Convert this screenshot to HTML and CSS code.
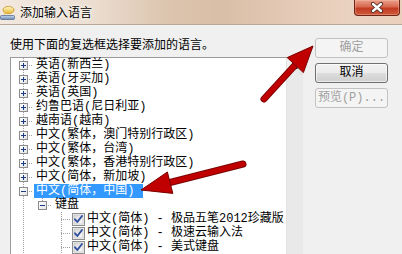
FILE: index.html
```html
<!DOCTYPE html>
<html lang="zh-CN">
<head>
<meta charset="utf-8">
<title>添加输入语言</title>
<link rel="stylesheet" href="styles.css">
</head>
<body>
<div class="window">
  <div class="titlebar">
    <svg class="app-icon" width="16" height="18" viewBox="0 0 16 18">
      <defs>
        <linearGradient id="bub" x1="0" y1="0" x2="0" y2="1">
          <stop offset="0" stop-color="#fff8c8"/>
          <stop offset="1" stop-color="#e8b830"/>
        </linearGradient>
        <linearGradient id="kb" x1="0" y1="0" x2="0" y2="1">
          <stop offset="0" stop-color="#c8d8ec"/>
          <stop offset="1" stop-color="#6a88b4"/>
        </linearGradient>
      </defs>
      <ellipse cx="8.5" cy="7" rx="5.5" ry="3.6" fill="url(#bub)" stroke="#c0901c" stroke-width="0.8"/>
      <path d="M5 9.5 L3.5 12 L7 10.2 Z" fill="#e8c040"/>
      <rect x="0.5" y="12.5" width="14" height="4" rx="1" fill="url(#kb)" stroke="#5a6f90" stroke-width="0.8"/>
    </svg>
    <span class="title">添加输入语言</span>
    <div class="close">
      <svg width="14" height="11" viewBox="0 0 14 11">
        <path d="M3 2 L11 9 M11 2 L3 9" stroke="#4a2a22" stroke-width="4.2" stroke-linecap="round"/>
        <path d="M3 2 L11 9 M11 2 L3 9" stroke="#ffffff" stroke-width="2.4" stroke-linecap="round"/>
      </svg>
    </div>
  </div>

  <div class="content">
    <div class="main">
      <p class="hint">使用下面的复选框选择要添加的语言。</p>
      <div class="treebox">
        <div class="tree">
          <div class="row"><span class="g t"><i class="exp plus"></i></span><span class="label">英语(新西兰)</span></div>
          <div class="row"><span class="g t"><i class="exp plus"></i></span><span class="label">英语(牙买加)</span></div>
          <div class="row"><span class="g t"><i class="exp plus"></i></span><span class="label">英语(英国)</span></div>
          <div class="row"><span class="g t"><i class="exp plus"></i></span><span class="label">约鲁巴语(尼日利亚)</span></div>
          <div class="row"><span class="g t"><i class="exp plus"></i></span><span class="label">越南语(越南)</span></div>
          <div class="row"><span class="g t"><i class="exp plus"></i></span><span class="label">中文(繁体，澳门特别行政区)</span></div>
          <div class="row"><span class="g t"><i class="exp plus"></i></span><span class="label">中文(繁体，台湾)</span></div>
          <div class="row"><span class="g t"><i class="exp plus"></i></span><span class="label">中文(繁体，香港特别行政区)</span></div>
          <div class="row"><span class="g t"><i class="exp plus"></i></span><span class="label">中文(简体，新加坡)</span></div>
          <div class="row"><span class="g t"><i class="exp"></i></span><span class="label selected">中文(简体，中国)</span></div>
          <div class="row"><span class="g v"></span><span class="g l"><i class="exp"></i></span><span class="label">键盘</span></div>
          <div class="row"><span class="g v"></span><span class="g"></span><span class="g t"></span><span class="check"><svg width="13" height="13" viewBox="0 0 13 13"><use href="#cb"/></svg></span><span class="label leaf">中文(简体) - 极品五笔2012珍藏版</span></div>
          <div class="row"><span class="g v"></span><span class="g"></span><span class="g t"></span><span class="check"><svg width="13" height="13" viewBox="0 0 13 13"><use href="#cb"/></svg></span><span class="label leaf">中文(简体) - 极速云输入法</span></div>
          <div class="row"><span class="g v"></span><span class="g"></span><span class="g t"></span><span class="check"><svg width="13" height="13" viewBox="0 0 13 13"><use href="#cb"/></svg></span><span class="label leaf">中文(简体) - 美式键盘</span></div>
        </div>
        <div class="vscroll">
          <div class="sbtn"><svg width="7" height="4" viewBox="0 0 7 4"><path d="M0 4 L3.5 0 L7 4 Z" fill="#222"/></svg></div>
        </div>
      </div>
    </div>
    <div class="buttons">
      <div class="btn disabled">确定</div>
      <div class="btn">取消</div>
      <div class="btn disabled">预览(P)...</div>
    </div>
  </div>

  <svg class="defs" width="0" height="0">
    <defs>
      <linearGradient id="cbg" x1="0" y1="0" x2="1" y2="1">
        <stop offset="0" stop-color="#d8d8d8"/>
        <stop offset="1" stop-color="#fbfbfb"/>
      </linearGradient>
      <g id="cb">
        <rect x="0.5" y="0.5" width="12" height="12" fill="#f4f4f4" stroke="#8e8f8f"/>
        <rect x="2" y="2" width="9" height="9" fill="url(#cbg)" stroke="#b8b8b8" stroke-width="0.6"/>
        <path d="M3 6.3 L5.3 9 L10 3" fill="none" stroke="#2f4f9f" stroke-width="1.9" stroke-linejoin="round" stroke-linecap="round"/>
      </g>
    </defs>
  </svg>

  <svg class="arrows" width="402" height="254" viewBox="0 0 402 254">
    <g stroke-linejoin="round">
      <line x1="264" y1="99" x2="297" y2="63" stroke="#7a0000" stroke-width="7" stroke-linecap="round"/>
      <line x1="264" y1="99" x2="297" y2="63" stroke="#c00000" stroke-width="5" stroke-linecap="round"/>
      <path d="M313 46 L303.4 72.6 L287.2 57.6 Z" fill="#c00000" stroke="#7a0000" stroke-width="1"/>
      <line x1="243" y1="164" x2="168" y2="183" stroke="#7a0000" stroke-width="7" stroke-linecap="round"/>
      <line x1="243" y1="164" x2="168" y2="183" stroke="#c00000" stroke-width="5" stroke-linecap="round"/>
      <path d="M141 190 L167.4 172 L172.8 193.4 Z" fill="#c00000" stroke="#7a0000" stroke-width="1"/>
    </g>
  </svg>
</div>
</body>
</html>
```

FILE: styles.css
```css
html, body {
  margin: 0;
  padding: 0;
}

body {
  font-family: "Liberation Mono", "Noto Sans CJK SC", monospace;
  font-size: 12px;
  color: #000;
}

.window {
  position: relative;
  width: 402px;
  height: 254px;
  overflow: hidden;
  background: #f0f0f0;
}

.titlebar {
  display: flex;
  align-items: center;
  height: 24px;
  border-bottom: 1px solid #b8a696;
  background: linear-gradient(90deg, #f2e8df 0%, #ecdfd2 22%, #dcc4ae 42%, #d9bea7 55%, #e4cab6 72%, #ebd3c1 88%, #e9cfbc 100%);
}

.app-icon {
  flex: none;
  margin: 0 4px 0 0;
}

.title {
  font-family: "Noto Sans CJK SC", sans-serif;
  font-size: 12px;
  line-height: 16px;
  text-shadow: 0 0 6px rgba(255, 255, 255, 0.95), 0 0 3px rgba(255, 255, 255, 0.9);
}

.close {
  align-self: flex-start;
  margin-left: auto;
  margin-right: 2px;
  width: 44px;
  height: 15px;
  border: 1px solid #6e2418;
  border-top: none;
  border-radius: 0 0 4px 4px;
  background: linear-gradient(to bottom, #e9a08c 0%, #d9684f 45%, #c23b22 55%, #cf5a3c 100%);
  display: flex;
  align-items: center;
  justify-content: center;
  box-shadow: inset 0 0 0 1px rgba(255, 200, 180, 0.35);
}

.close svg {
  display: block;
  margin-top: -1px;
}

.content {
  display: flex;
  gap: 14px;
  padding: 11px 14px 0 10px;
}

.main {
  width: 291px;
  flex: none;
}

.hint {
  margin: 0 0 5px 0;
  line-height: 16px;
  font-family: "Noto Sans CJK SC", sans-serif;
}

.treebox {
  display: flex;
  height: 220px;
  border: 1px solid #9a9a9a;
  border-right-color: #828282;
  background: #fff;
}

.tree {
  flex: 1;
  padding-left: 3px;
}

.row {
  display: flex;
  align-items: center;
  height: 14px;
  line-height: 14px;
  white-space: nowrap;
}

.g {
  flex: none;
  width: 19px;
  height: 14px;
  display: flex;
  align-items: center;
  justify-content: center;
}

.g.v {
  background: repeating-linear-gradient(to bottom, #a0a0a0 0 1px, transparent 1px 2px) 9px 0 / 1px 100% no-repeat;
}

.g.t {
  background:
    repeating-linear-gradient(to bottom, #a0a0a0 0 1px, transparent 1px 2px) 9px 0 / 1px 100% no-repeat,
    repeating-linear-gradient(to right, #a0a0a0 0 1px, transparent 1px 2px) 9px 7px / 10px 1px no-repeat;
}

.g.l {
  background:
    repeating-linear-gradient(to bottom, #a0a0a0 0 1px, transparent 1px 2px) 9px 0 / 1px 7px no-repeat,
    repeating-linear-gradient(to right, #a0a0a0 0 1px, transparent 1px 2px) 9px 7px / 10px 1px no-repeat;
}

.exp {
  position: relative;
  width: 7px;
  height: 7px;
  border: 1px solid #8c8c8c;
  background: linear-gradient(135deg, #ffffff 0%, #e4e4e4 100%);
  margin-top: 1px;
}

.exp::before {
  content: "";
  position: absolute;
  left: 1px;
  top: 3px;
  width: 5px;
  height: 1px;
  background: #1c3a8a;
}

.exp.plus::after {
  content: "";
  position: absolute;
  left: 3px;
  top: 1px;
  width: 1px;
  height: 5px;
  background: #1c3a8a;
}

.label {
  margin-left: 1px;
  padding: 0 2px;
}

.label.selected {
  background: #3399ff;
  color: #fff;
  padding-right: 9px;
}

.check {
  flex: none;
  margin-left: 1px;
  width: 13px;
  height: 13px;
}

.check svg {
  display: block;
}

.label.leaf {
  margin-left: 0;
}

.vscroll {
  flex: none;
  width: 16px;
  background: #e9e9e9;
  border-left: 1px solid #e2e2e2;
}

.sbtn {
  height: 17px;
  display: flex;
  align-items: center;
  justify-content: center;
  background: linear-gradient(to right, #f2f2f2, #e2e2e2);
}

.buttons {
  flex: none;
  width: 73px;
  margin-top: 2px;
  display: flex;
  flex-direction: column;
  gap: 5px;
}

.btn {
  height: 18px;
  line-height: 18px;
  text-align: center;
  border: 1px solid #707070;
  border-radius: 3px;
  background: linear-gradient(to bottom, #f2f2f2 0%, #ebebeb 48%, #dddddd 52%, #cfcfcf 100%);
  box-shadow: inset 0 0 0 1px rgba(255, 255, 255, 0.6);
}

.btn.disabled {
  color: #a0a0a0;
  border-color: #c2c2c2;
  background: #f4f4f4;
  box-shadow: none;
}

.defs {
  position: absolute;
  width: 0;
  height: 0;
}

.arrows {
  position: absolute;
  left: 0;
  top: 0;
  pointer-events: none;
}
```
